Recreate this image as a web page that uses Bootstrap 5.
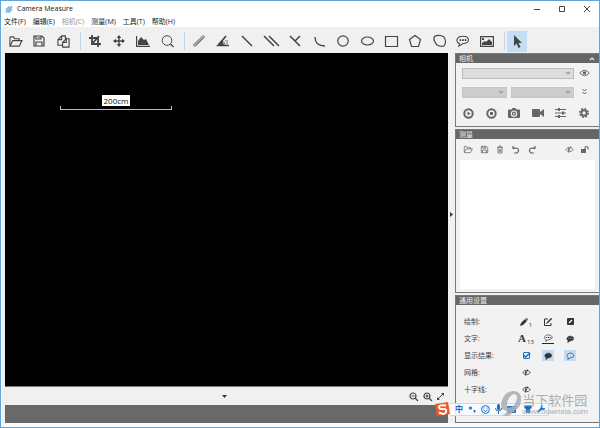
<!DOCTYPE html>
<html lang="zh-CN">
<head>
<meta charset="utf-8">
<meta name="viewport" content="width=device-width, initial-scale=1">
<title>Camera Measure</title>
<link href="https://cdn.jsdelivr.net/npm/bootstrap@5.3.0/dist/css/bootstrap.min.css" rel="stylesheet">
<style>
body{font-family:"Open Sans","Noto Sans CJK SC",sans-serif;font-size:7px;line-height:10px;color:#333;background:#fff}
.app-window{min-height:100vh;border:1px solid #5fa5dc;background:#fff}
svg{display:block;fill:none;stroke:currentColor;stroke-width:1.2;overflow:visible}
.solid{fill:currentColor;stroke:none}
button.tool{border:0;background:transparent;color:#444;padding:0;display:flex;align-items:center;justify-content:center}
.title-bar{height:16px;font-size:7px;color:#111}
.win-controls button{width:25px;height:15px}
.menu-bar{height:10px;padding-left:3px;gap:7px}
.menu-bar button{font-size:7px;line-height:10px;color:#222}
.menu-bar button:disabled{color:#999}
.app-body{background:#f0f0f0;border:solid #fafafa;border-width:0 0 4px 1px}
.tool-bar{height:26px;padding:2px 0 0 1px}
.tool-bar .tool{width:24px;height:21px}
.tool-bar .tool.chosen,.opts .chosen{background:#c5dcf5}
.tool-bar .tool.chosen{width:20px}
.divider{width:1px;height:18px;background:#bfd2e6;margin:0 2px 0 5px}
.canvas{background:#000;border-bottom:1px solid #777;padding:42px 0 0 55px}
.ruler{width:112px}
.ruler-label{background:#fff;color:#111;font-size:8px;line-height:11px;padding:0 2px}
.ruler-bar{height:4px;border:1px solid #bbb;border-top:0;width:100%}
.work{padding-left:3px}
.under-bar{height:18px}
.status-strip{height:18px;background:#696969}
.splitter{width:7px}
.side{width:144px;gap:2px}
.side section{border:1px solid #777;border-right:0;background:#f2f2f2}
.side h2{font-size:7px;line-height:9px;height:9px;margin:0;padding:0 4px 0 3px;background:#666;color:#eee;font-weight:400}
.side .tool{color:#666}
.combo{appearance:none;border:1px solid #bbb;background:#ddd;border-radius:0;height:11px;font-size:7px;padding:0}
.combo:disabled{background:#ccc;border-color:#c6c6c6}
.combo-wrap{display:grid;align-items:center}
.combo-wrap>*{grid-area:1/1}
.combo-wrap svg{justify-self:end;margin-right:3px;color:#999;pointer-events:none}
.cam{padding:4px 9px 7px 6px;gap:7px}
.cam .tool{width:12px;height:12px}
.cam-combos{gap:4px}
.cam-small{gap:4px}
.w-first{width:45px}
.cam-actions{margin-top:2px}
.m-tools{height:21px;padding:0 6px 0 4px}
.m-tools .tool{width:16px;height:12px}
.m-list{background:#fff;margin:0 4px 3px}
.general{height:128px}
.opts{padding:8px 0 0 8px;color:#444}
.opt-row{height:17px}
.opt-row>span{width:51px}
.opt-cell{width:22px;height:12px;display:flex;align-items:center;justify-content:center}
.opts .tool{width:12px;height:11px;color:#333;font-size:6px}
.opts .tool.hold{width:18px;gap:1px}
.opts .tool sub{bottom:-3px;font-size:6px;line-height:6px}
.letter{font:bold 11px/11px "Liberation Serif",serif}
.check{appearance:none;width:7px;height:7px;border:1px solid #2374bd;border-radius:1px;margin:0}
.check-wrap{display:grid;place-items:center;color:#1769b5}
.check-wrap>*{grid-area:1/1}
.check-wrap svg{pointer-events:none}
.brand{position:absolute;right:11px;bottom:11px;color:#a9adb1;gap:1px;pointer-events:none}
.brand strong{display:block;font-size:13px;line-height:14px;font-weight:400}
.brand small{display:block;font-family:"Liberation Sans",sans-serif;font-size:8px;line-height:9px}
.ime{position:absolute;right:50px;bottom:11px;width:114px;height:14px;color:#1471c4}
.ime-keys{background:#fafcffd9;border:1px solid #c3dcf2;border-left:0;height:13px;gap:3px;padding:0 2px 0 4px}
.ime .tool{color:#1471c4;width:10px;height:10px;font-size:8px;font-weight:700}
</style>
<script src="https://cdn.jsdelivr.net/npm/bootstrap@5.3.0/dist/js/bootstrap.bundle.min.js"></script>
</head>
<body>
<svg width="0" height="0" class="position-absolute" aria-hidden="true"><defs>
<symbol id="folder" viewBox="0 0 16 14"><path d="M2 11V3q0-1 1-1h3l1 2h5v2M2 12l3-6h10l-3 6z"/></symbol>
<symbol id="save" viewBox="0 0 14 14"><path d="M2 2h8l2 2v8H2zM4 2v3h5V2M4 12V8h6v4M7 3v1"/></symbol>
<symbol id="eye" viewBox="0 0 14 10"><path d="M1 5q6-7 12 0q-6 7-12 0z"/><circle cx="7" cy="5" r="2.3" class="solid"/></symbol>
<symbol id="eyeoff" viewBox="0 0 14 10"><path d="M1 5q6-7 12 0q-6 7-12 0zM9 0L5 10"/><path d="M7 2q-4 2-1 6z" class="solid"/></symbol>
<symbol id="bubble" viewBox="0 0 16 14"><path d="M4 10C0 8 1 2 8 2s8 8 0 8l-5 3z"/></symbol>
<symbol id="dots" viewBox="0 0 16 14"><path d="M4 10C-1 8 0 1.500 8 1.500s9 8.500 0 8.500l-5 3z"/><path class="solid" d="M4 5h2v2H4zm3 0h2v2H7zm3 0h2v2h-2z"/></symbol>
<symbol id="chev" viewBox="0 0 6 4"><path d="M1 1l2 2 2-2"/></symbol>
</defs></svg>
<div class="app-window d-flex flex-column position-relative">
<header class="title-bar d-flex align-items-center justify-content-between">
 <div class="d-flex align-items-center gap-1 ps-1">
  <svg width="8" height="9" viewBox="0 0 9 9" style="color:#72b5e8"><path stroke-width="1.8" d="M1 5l4-4M1 8l7-7M4 8l4-4"/></svg>
  <span>Camera Measure</span></div>
 <div class="win-controls d-flex">
  <button class="tool" aria-label="最小化"><svg width="6" height="6"><path stroke-width="1" d="M0 3.5h6"/></svg></button>
  <button class="tool" aria-label="最大化"><svg width="6" height="6"><path stroke-width="1" d="M.5.5h5v5h-5z"/></svg></button>
  <button class="tool" aria-label="关闭"><svg width="6" height="6"><path stroke-width="1" d="M0 0l6 6M6 0L0 6"/></svg></button>
 </div>
</header>
<nav class="menu-bar d-flex align-items-center" aria-label="菜单">
 <button class="tool">文件(F)</button><button class="tool">编辑(E)</button><button class="tool" disabled>相机(C)</button><button class="tool">测量(M)</button><button class="tool">工具(T)</button><button class="tool">帮助(H)</button>
</nav>
<div class="app-body flex-grow-1 d-flex flex-column">
<div class="tool-bar d-flex align-items-center" role="toolbar">
 <button class="tool" aria-label="打开"><svg width="15" height="13"><use href="#folder"/></svg></button>
 <button class="tool" aria-label="保存"><svg width="14" height="14"><use href="#save"/></svg></button>
 <button class="tool" aria-label="复制"><svg width="13" height="13" viewBox="0 0 14 14"><path d="M6 11H1V5l4-4h4v3M5 1v4H1M10 4h3v9H6V8l4-4v4H6"/></svg></button>
 <span class="divider"></span>
 <button class="tool" aria-label="裁剪"><svg width="12" height="12" viewBox="0 0 12 12"><path stroke-width="1.8" d="M3 0v9h9M0 3h9v9M3 9l7-8"/></svg></button>
 <button class="tool" aria-label="移动"><svg width="12" height="12" viewBox="0 0 12 12"><path stroke-width="1.4" d="M6 1v10M1 6h10"/><path class="solid" d="M6 0l2.3 3H3.7zM6 12l2.3-3H3.7zM0 6l3-2.3v4.6zM12 6L9 3.700v4.600z"/></svg></button>
 <button class="tool" aria-label="图表"><svg width="14" height="11" viewBox="0 0 14 11"><path d="M.6 0v10.400H14"/><path class="solid" d="M2 9V5l3-4 3 3 2-1 3 6z"/></svg></button>
 <button class="tool" aria-label="缩放"><svg width="13" height="13" viewBox="0 0 13 13"><circle cx="6" cy="5.500" r="4.800" stroke-width="1"/><path d="M9.500 9l3 3"/></svg></button>
 <span class="divider"></span>
 <button class="tool" aria-label="标尺"><svg width="12" height="12" viewBox="0 0 12 12"><path stroke-width=".9" d="M.5 10l9.500-9.500 1.500 1.500L2 11.500zM2.500 10l7.500-7.500"/></svg></button>
 <button class="tool" aria-label="角度"><svg width="12" height="11" viewBox="0 0 12 11"><path stroke-width="1.7" d="M9 0L1 9.500h11"/><path d="M5 5q3 1 3 4M8 5h3M9 7h2" stroke-width=".7"/><path class="solid" d="M5 4L1 9h6z"/></svg></button>
 <button class="tool" aria-label="直线"><svg width="10" height="10"><path stroke-width="1.5" d="M0 0l10 10"/></svg></button>
 <button class="tool" aria-label="平行线"><svg width="15" height="10"><path stroke-width="1.500" d="M0 0l10 10M5 0l10 10"/></svg></button>
 <button class="tool" aria-label="垂线"><svg width="10" height="10"><path stroke-width="1.500" d="M0 0l10 10M10 0L5 5"/></svg></button>
 <button class="tool" aria-label="圆弧"><svg width="11" height="11"><path stroke-width="1.300" d="M1 1q0 9 10 9"/></svg></button>
 <button class="tool" aria-label="圆"><svg width="12" height="12"><circle cx="6" cy="6" r="5.200"/></svg></button>
 <button class="tool" aria-label="椭圆"><svg width="13" height="10"><ellipse cx="6.500" cy="5" rx="6" ry="4"/></svg></button>
 <button class="tool" aria-label="矩形"><svg width="13" height="11"><path d="M.5.500h12v10H.5z"/></svg></button>
 <button class="tool" aria-label="多边形"><svg width="12" height="12"><path d="M6 .5l5.500 4-2 7h-7L.5 4.500z"/></svg></button>
 <button class="tool" aria-label="曲线"><svg width="13" height="12"><path d="M2 1q5-1.500 9 1 3 5 0 9-3 1-7-1-5-6-2-9z"/></svg></button>
 <button class="tool" aria-label="批注"><svg width="14" height="12"><use href="#dots"/></svg></button>
 <button class="tool" aria-label="图片"><svg width="14" height="11" viewBox="0 0 14 11"><path d="M.6.600h12.800v9.800H.6z"/><path class="solid" d="M2 9V7l3-2 1 1 3-3 3 3v3zM2 2h2v2H2z"/></svg></button>
 <span class="divider"></span>
 <button class="tool chosen" aria-label="选择"><svg width="9" height="13" viewBox="0 0 9 13"><path class="solid" d="M1 0v11l2.500-2.500L5.500 13l2-1-2-4H9z"/></svg></button>
</div>
<div class="flex-grow-1 d-flex">
 <main class="work flex-grow-1 d-flex flex-column">
  <div class="canvas flex-grow-1"><div class="ruler d-flex flex-column align-items-center"><span class="ruler-label">200cm</span><span class="ruler-bar"></span></div></div>
  <div class="under-bar d-flex align-items-center">
   <div class="flex-grow-1 w-50 d-flex justify-content-end"><svg width="5" height="3"><path class="solid" d="M0 0h5L2.500 3z"/></svg></div>
   <div class="flex-grow-1 w-50 d-flex justify-content-end gap-1">
    <button class="tool" aria-label="缩小"><svg width="10" height="9"><circle cx="4" cy="4" r="3"/><path d="M6 6l3 3M2.500 4h3"/></svg></button>
    <button class="tool" aria-label="放大"><svg width="10" height="9"><circle cx="4" cy="4" r="3"/><path d="M6 6l3 3M2.500 4h3M4 2.500v3"/></svg></button>
    <button class="tool pe-1" aria-label="适应窗口"><svg width="7" height="7"><path stroke-width="1" d="M1 6l5-5"/><path class="solid" d="M4 0h3v3zM0 4v3h3z"/></svg></button>
   </div>
  </div>
  <div class="status-strip"></div>
 </main>
 <div class="splitter d-flex align-items-center justify-content-center pb-5"><svg width="3" height="5"><path class="solid" d="M0 0v5l3-2.500z"/></svg></div>
 <aside class="side d-flex flex-column">
  <section>
   <h2 class="d-flex justify-content-between align-items-center">相机<svg width="6" height="4" viewBox="0 0 6 4"><path d="M1 3l2-2 2 2"/></svg></h2>
   <div class="cam d-flex flex-column">
    <div class="d-flex align-items-center cam-combos"><label class="combo-wrap flex-grow-1"><select class="combo w-100" aria-label="相机"><option></option></select><svg width="6" height="4"><use href="#chev"/></svg></label><button class="tool" aria-label="显示"><svg width="11" height="8"><use href="#eye"/></svg></button></div>
    <div class="d-flex align-items-center cam-combos"><div class="d-flex flex-grow-1 cam-small"><label class="combo-wrap w-first"><select class="combo w-100" disabled aria-label="格式"><option></option></select><svg width="6" height="4"><use href="#chev"/></svg></label><label class="combo-wrap flex-grow-1"><select class="combo w-100" disabled aria-label="分辨率"><option></option></select><svg width="6" height="4"><use href="#chev"/></svg></label></div><button class="tool" aria-label="更多"><svg width="5" height="6"><path stroke-width="1" d="M.5 0l2 2 2-2M.5 3l2 2 2-2"/></svg></button></div>
    <div class="d-flex justify-content-between cam-actions">
     <button class="tool" aria-label="播放"><svg width="11" height="11"><circle cx="5.500" cy="5.500" r="4.200" stroke-width="2"/><path class="solid" d="M4.500 3.500v4l3-2z"/></svg></button>
     <button class="tool" aria-label="停止"><svg width="11" height="11"><circle cx="5.500" cy="5.500" r="4.200" stroke-width="2"/><path class="solid" d="M4 4h3v3H4z"/></svg></button>
     <button class="tool" aria-label="拍照"><svg width="12" height="10"><path class="solid" fill-rule="evenodd" d="M1 1.500h2.500L4.500 0h3l1 1.500H11q1 0 1 1V9q0 1-1 1H1q-1 0-1-1V2.500q0-1 1-1zM6 2.500a3.200 3.200 0 100 6.400 3.200 3.200 0 000-6.400z"/><circle cx="6" cy="5.700" r="1.500" /></svg></button>
     <button class="tool" aria-label="录像"><svg width="12" height="8"><path class="solid" d="M0 1q0-1 1-1h6q1 0 1 1v2l4-3v8L8 5v2q0 1-1 1H1q-1 0-1-1z"/></svg></button>
     <button class="tool" aria-label="参数"><svg width="11" height="10"><path stroke-width="1" d="M0 1.500h11M0 5h11M0 8.500h11"/><path class="solid" d="M3 0h2v3H3zM7 3.500h2v3H7zM3 7h2v3H3z"/></svg></button>
     <button class="tool" aria-label="设置"><svg width="10" height="10"><circle cx="5" cy="5" r="2.700" stroke-width="2"/><circle cx="5" cy="5" r="4.300" stroke-width="1.400" stroke-dasharray="1.900 1.477"/></svg></button>
    </div>
   </div>
  </section>
  <section class="d-flex flex-column flex-grow-1">
   <h2>测量</h2>
   <div class="m-tools d-flex align-items-center">
    <button class="tool" aria-label="打开"><svg width="10" height="9"><use href="#folder"/></svg></button>
    <button class="tool" aria-label="保存"><svg width="9" height="9"><use href="#save"/></svg></button>
    <button class="tool" aria-label="删除"><svg width="6" height="7"><path stroke-width=".8" d="M0 1.500h6M2 1V0h2v1M1 2v5h4V2M2.300 3v3M3.700 3v3"/></svg></button>
    <button class="tool" aria-label="撤销"><svg width="8" height="8"><path d="M1 2h3a2.500 2.500 0 010 5H2M1 0v2.500h2.500"/></svg></button>
    <button class="tool me-auto" aria-label="重做"><svg width="8" height="8"><path d="M7 2H4a2.500 2.500 0 100 5h2M7 0v2.500H4.500"/></svg></button>
    <button class="tool" aria-label="隐藏"><svg width="9" height="7"><use href="#eyeoff"/></svg></button>
    <button class="tool" aria-label="解锁"><svg width="8" height="7"><path class="solid" d="M0 3h5v4H0z"/><path d="M4 3V2q0-1.500 1.500-1.500T7 2v1.500"/></svg></button>
   </div>
   <div class="m-list flex-grow-1"></div>
  </section>
  <section class="general">
   <h2>通用设置</h2>
   <div class="opts">
    <div class="opt-row d-flex align-items-center"><span>绘制:</span>
     <div class="opt-cell"><button class="tool hold" aria-label="线宽 1"><svg width="8" height="8"><path class="solid" d="M0 8l1-3 4-4 2 2-4 4zM5.500.500l1-.5L8 1.500l-.5 1z"/></svg><sub>1</sub></button></div>
     <div class="opt-cell"><button class="tool" aria-label="线条颜色"><svg width="8" height="8"><path stroke-width="1" d="M4 1H.5v6.500H7V5M3 5l4.500-4.500"/><path class="solid" d="M2 6l1-2 4-4 1 1-4 4z"/></svg></button></div>
     <div class="opt-cell"><button class="tool" aria-label="填充"><svg width="7" height="7"><rect class="solid" width="7" height="7" rx="1"/><path stroke="#fff" stroke-width="1.200" d="M2 5l3-3"/></svg></button></div></div>
    <div class="opt-row d-flex align-items-center"><span>文字:</span>
     <div class="opt-cell"><button class="tool hold" aria-label="字号 13"><span class="letter">A</span><sub>13</sub></button></div>
     <div class="opt-cell"><button class="tool border-bottom border-dark" aria-label="文字颜色"><svg width="9" height="8"><use href="#dots"/></svg></button></div>
     <div class="opt-cell"><button class="tool" aria-label="文字背景"><svg width="9" height="8" viewBox="0 0 16 14"><path fill="currentColor" d="M4 10C0 8 1 2 8 2s8 8 0 8l-5 3z"/><path stroke="#bbb" stroke-dasharray="2 1" d="M4 6h8"/></svg></button></div></div>
    <div class="opt-row d-flex align-items-center"><span>显示结果:</span>
     <div class="opt-cell"><label class="check-wrap"><input class="check" type="checkbox" checked aria-label="显示结果"><svg width="8" height="7"><path stroke-width="1.500" d="M1.500 3l2 2L8 1"/></svg></label></div>
     <div class="opt-cell"><button class="tool chosen" aria-label="实心标签"><svg width="9" height="8"><use href="#bubble" fill="currentColor"/></svg></button></div>
     <div class="opt-cell"><button class="tool chosen" aria-label="空心标签"><svg width="9" height="8"><use href="#bubble"/></svg></button></div></div>
    <div class="opt-row d-flex align-items-center"><span>网格:</span><div class="opt-cell"><button class="tool" aria-label="显示网格"><svg width="9" height="7"><use href="#eyeoff"/></svg></button></div></div>
    <div class="opt-row d-flex align-items-center"><span>十字线:</span><div class="opt-cell"><button class="tool" aria-label="显示十字线"><svg width="9" height="7"><use href="#eyeoff"/></svg></button></div></div>
   </div>
  </section>
 </aside>
</div>
</div>
<div class="ime d-flex align-items-center">
 <svg width="15" height="14" viewBox="0 0 15 14"><path fill="#f15a24" stroke="none" d="M0 2L13 0l2 12-13 2z"/><path stroke="#fff" stroke-width="2" d="M11 3.500Q4 2.500 4 5t4 2 3 3-7 .5"/></svg>
 <div class="ime-keys d-flex align-items-center flex-grow-1">
  <button class="tool" aria-label="切换语言">中</button>
  <button class="tool" aria-label="标点"><svg width="7" height="7"><circle cx="1.500" cy="2" r="1"/><path class="solid" d="M4.500 4h2v1.500L5 7z"/></svg></button>
  <button class="tool" aria-label="表情"><svg width="9" height="9"><circle cx="4.500" cy="4.500" r="3.900" stroke-width="1"/><path stroke-width="1" d="M2.500 5q2 3 4 0M3 2.500v1M6 2.500v1"/></svg></button>
  <button class="tool" aria-label="语音"><svg width="7" height="10"><rect class="solid" x="2" width="3" height="6" rx="1.500"/><path stroke-width="1" d="M.5 4q0 3 3 3t3-3M3.500 7v3"/></svg></button>
  <button class="tool me-auto" aria-label="键盘"><svg width="9" height="7"><rect class="solid" width="9" height="7" rx="1"/><path stroke="#fff" stroke-width=".8" stroke-dasharray="1 1" d="M1 2h7M1 3.800h7M2 5.500h5"/></svg></button>
  <button class="tool" aria-label="皮肤"><svg width="8" height="8"><path class="solid" d="M2 0q2 2 4 0l2 2-1 2-1-.5V8H2V3.500L1 4 0 2z"/></svg></button>
  <button class="tool" aria-label="工具"><svg width="8" height="8"><path stroke-width="2" d="M1 7l4-4"/><path stroke-width="1.600" d="M5.500.500Q3.500 2 5 3.500T7.500 3"/></svg></button>
 </div>
</div>
<div class="brand d-flex align-items-end">
 <svg width="20" height="25" viewBox="0 0 20 25"><path fill="#a9adb1" fill-opacity=".85" stroke="none" fill-rule="evenodd" d="M0 15Q1 1 12 0q9 0 8 10-1 8-8 10-1 4-6 5l-6-1q5 0 6-4-6-1-6-5zM13 3Q6 6 6 15q0 3 2 2 7-2 8-10 0-4-3-4z"/></svg>
 <div><strong>当下软件园</strong><small>www.downxia.com</small></div>
</div>
</div>
</body>
</html>
